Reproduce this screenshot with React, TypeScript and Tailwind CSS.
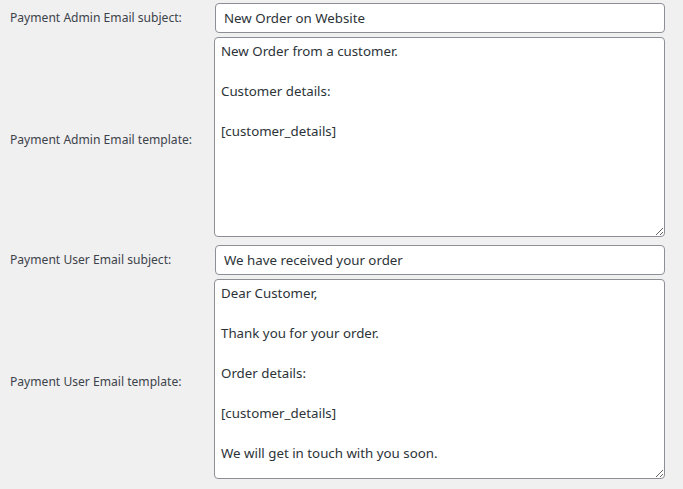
const fieldFont = { fontFamily: '"Noto Sans", "Open Sans", sans-serif' };

const adminTemplate = `New Order from a customer.

Customer details:

[customer_details]`;

const userTemplate = `Dear Customer,

Thank you for your order.

Order details:

[customer_details]

We will get in touch with you soon.`;

const SubjectRow = ({ label, value }: { label: string; value: string }) => (
  <>
    <div className="flex items-center pl-[10px] text-[12.1px] text-[#3c434a]">{label}</div>
    <input
      readOnly
      defaultValue={value}
      className="h-[30px] w-[450px] rounded-[4px] border border-[#8c8f94] bg-white px-[8px] text-[13.3px] text-[#2c3338] outline-none"
    />
  </>
);

const TemplateRow = ({ label, value }: { label: string; value: string }) => (
  <>
    <div className="flex items-center pl-[10px] pt-[6px] text-[12.1px] text-[#3c434a]">{label}</div>
    <textarea
      readOnly
      defaultValue={value}
      className="h-[200px] w-[451px] -ml-px resize rounded-[4px] border border-[#8c8f94] bg-white px-[6px] pt-[3px] pb-[3px] text-[13.3px] leading-[20px] text-[#2c3338] outline-none"
    />
  </>
);

export default function App() {
  return (
    <main className="min-h-screen bg-[#f0f0f1] pt-[3px]" style={fieldFont}>
      <div className="grid grid-cols-[215px_450px]">
        <SubjectRow label="Payment Admin Email subject:" value="New Order on Website" />
        <div className="col-span-2 h-[4px]" />
        <TemplateRow label="Payment Admin Email template:" value={adminTemplate} />
        <div className="col-span-2 h-[8px]" />
        <SubjectRow label="Payment User Email subject:" value="We have received your order" />
        <div className="col-span-2 h-[4px]" />
        <TemplateRow label="Payment User Email template:" value={userTemplate} />
      </div>
    </main>
  );
}
